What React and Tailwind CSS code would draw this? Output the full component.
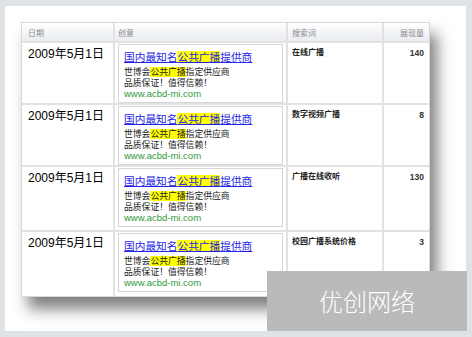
import React from 'react';

const rows = [
  { term: '在线广播', count: '140', h: 'h-[62px]' },
  { term: '数字视频广播', count: '8', h: 'h-[62px]' },
  { term: '广播在线收听', count: '130', h: 'h-[65px]' },
  { term: '校园广播系统价格', count: '3', h: 'h-[64px]' },
];

const font = "font-['Liberation_Sans','Noto_Sans_CJK_SC',sans-serif]";

// ad preview box shown in the 创意 column
const Creative = () => (
  <div className="mx-[3px] mt-[1px] h-[59px] border border-[#d6d6d6] pl-[5px] pt-[5px]">
    <div className="text-[10.7px] leading-[14px] text-[#2424e6] underline">
      国内最知名<span className="bg-[#ffff00]">公共广播</span>提供商
    </div>
    <div className="mt-[3px] text-[8.8px] leading-[11px] text-[#222]">
      世博会<span className="bg-[#ffff00]">公共广播</span>指定供应商
    </div>
    <div className="text-[8.8px] leading-[11px] text-[#222]">品质保证！值得信赖！</div>
    <div className="text-[9.5px] leading-[10px] text-[#2f9a3c]">www.acbd-mi.com</div>
  </div>
);

const App = () => {
  return (
    <div className={`w-[472px] h-[337px] bg-[#dfe3e6] pt-[6px] pl-[5px] relative overflow-hidden ${font}`}>
      <div className="w-[461px] h-[325px] bg-white pt-[16px] pl-[16px]">
        {/* table */}
        <div className="w-[409px] border border-[#d9d9d9] bg-white shadow-[7px_12px_14px_rgba(0,0,0,0.5)]">
          <div className="grid grid-cols-[93px_173px_96px_45px] h-[20px] bg-gradient-to-b from-white to-[#e9ecf1] border-b-2 border-[#e2e2e2] text-[8px] text-[#8a8a8a]">
            <div className="pl-[6px] pt-[5px] border-r-2 border-[#e2e2e2]">日期</div>
            <div className="pl-[3px] pt-[5px] border-r-2 border-[#e2e2e2]">创意</div>
            <div className="pl-[4px] pt-[5px] border-r-2 border-[#e2e2e2]">搜索词</div>
            <div className="pr-[5px] pt-[5px] text-right">展现量</div>
          </div>
          {rows.map((r, i) => (
            <div
              key={i}
              className={`grid grid-cols-[93px_173px_96px_45px] ${r.h} ${i < rows.length - 1 ? 'border-b-2 border-[#e2e2e2]' : ''}`}
            >
              <div className="pl-[6px] pt-[3px] border-r-2 border-[#e2e2e2] text-[12px] leading-[16px] text-black">
                2009年5月1日
              </div>
              <div className="border-r-2 border-[#e2e2e2]">
                <Creative />
              </div>
              <div className="pl-[4px] pt-[4px] border-r-2 border-[#e2e2e2] text-[8px] font-bold text-[#222]">
                {r.term}
              </div>
              <div className="pr-[5px] pt-[4px] text-right text-[8.5px] font-bold text-[#333]">{r.count}</div>
            </div>
          ))}
        </div>
      </div>

      {/* brand overlay */}
      <div className="absolute left-[267px] top-[271px] w-[200px] h-[60px] bg-[#bababa] flex items-center justify-center text-[24px] text-white font-light font-['Noto_Sans_CJK_SC',sans-serif]">
        优创网络
      </div>
    </div>
  );
};

export default App;
